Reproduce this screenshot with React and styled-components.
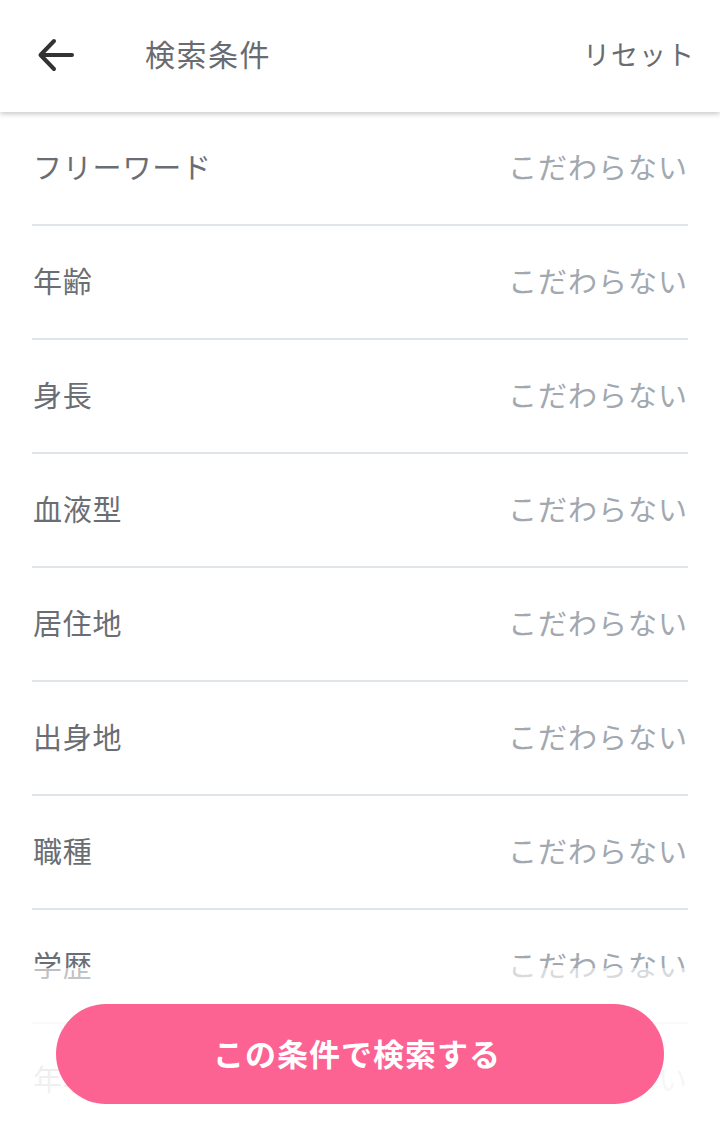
import React from "react";
import styled, { createGlobalStyle } from "styled-components";

const GlobalStyle = createGlobalStyle`
  html, body {
    margin: 0;
    padding: 0;
    background: #ffffff;
    font-family: "Noto Sans CJK JP", "Noto Sans", sans-serif;
  }
`;

const ROWS = [
  "フリーワード",
  "年齢",
  "身長",
  "血液型",
  "居住地",
  "出身地",
  "職種",
  "学歴",
  "年収",
];

export default function App() {
  return (
    <>
      <GlobalStyle />
      <Page>
        <Header>
          <BackButton aria-label="戻る">
            <svg width="40" height="40" viewBox="0 0 40 40" fill="none">
              <path
                d="M36 20H6M18 6L4.5 20L18 34"
                stroke="#333333"
                strokeWidth="4"
                strokeLinecap="round"
                strokeLinejoin="round"
              />
            </svg>
          </BackButton>
          <Title>検索条件</Title>
          <ResetText>リセット</ResetText>
        </Header>
        <List>
          {ROWS.map((label) => (
            <Row key={label}>
              <Label>{label}</Label>
              <Value>こだわらない</Value>
            </Row>
          ))}
        </List>
        <BottomFade>
          <SearchButton>この条件で検索する</SearchButton>
        </BottomFade>
      </Page>
    </>
  );
}

const Page = styled.div`
  width: 720px;
  height: 1136px;
  overflow: hidden;
  background: #ffffff;
`;

const Header = styled.header`
  position: relative;
  z-index: 2;
  height: 112px;
  display: flex;
  align-items: center;
  padding: 0 25px 6px 32px;
  box-sizing: border-box;
  background: #ffffff;
  box-shadow: 0 2px 5px rgba(0, 0, 0, 0.22);
`;

const BackButton = styled.div`
  width: 48px;
  height: 48px;
  display: flex;
  align-items: center;
  justify-content: center;
  margin-top: 4px;
`;

const Title = styled.div`
  margin-left: 65px;
  font-size: 30px;
  line-height: 1;
  color: #686c72;
  letter-spacing: 1.5px;
`;

const ResetText = styled.div`
  margin-left: auto;
  font-size: 27px;
  line-height: 1;
  color: #686c72;
  letter-spacing: 1px;
`;

const List = styled.div`
  padding: 0 32px;
`;

const Row = styled.div`
  display: flex;
  align-items: center;
  justify-content: space-between;
  padding-bottom: 4px;
  height: 108px;
  border-bottom: 2px solid #dfe5e8;
`;

const Label = styled.div`
  font-size: 29px;
  line-height: 1;
  color: #6a6e74;
  padding-left: 1px;
  letter-spacing: 0.8px;
`;

const Value = styled.div`
  font-size: 29px;
  line-height: 1;
  color: #a2a8b0;
  letter-spacing: 1px;
`;

const BottomFade = styled.div`
  position: fixed;
  left: 0;
  bottom: 0;
  width: 720px;
  height: 168px;
  display: flex;
  justify-content: center;
  padding-top: 36px;
  box-sizing: border-box;
  background: linear-gradient(
    to bottom,
    rgba(255, 255, 255, 0.55) 0%,
    rgba(255, 255, 255, 0.85) 40%,
    rgba(255, 255, 255, 0.95) 100%
  );
`;

const SearchButton = styled.button`
  width: 608px;
  height: 100px;
  border: none;
  border-radius: 50px;
  padding: 0 6px 4px 0;
  background: #fc6393;
  color: #ffffff;
  font-family: "Noto Sans CJK JP", "Noto Sans", sans-serif;
  font-size: 31px;
  line-height: 1;
  font-weight: 700;
  letter-spacing: 1px;
  cursor: pointer;
`;
